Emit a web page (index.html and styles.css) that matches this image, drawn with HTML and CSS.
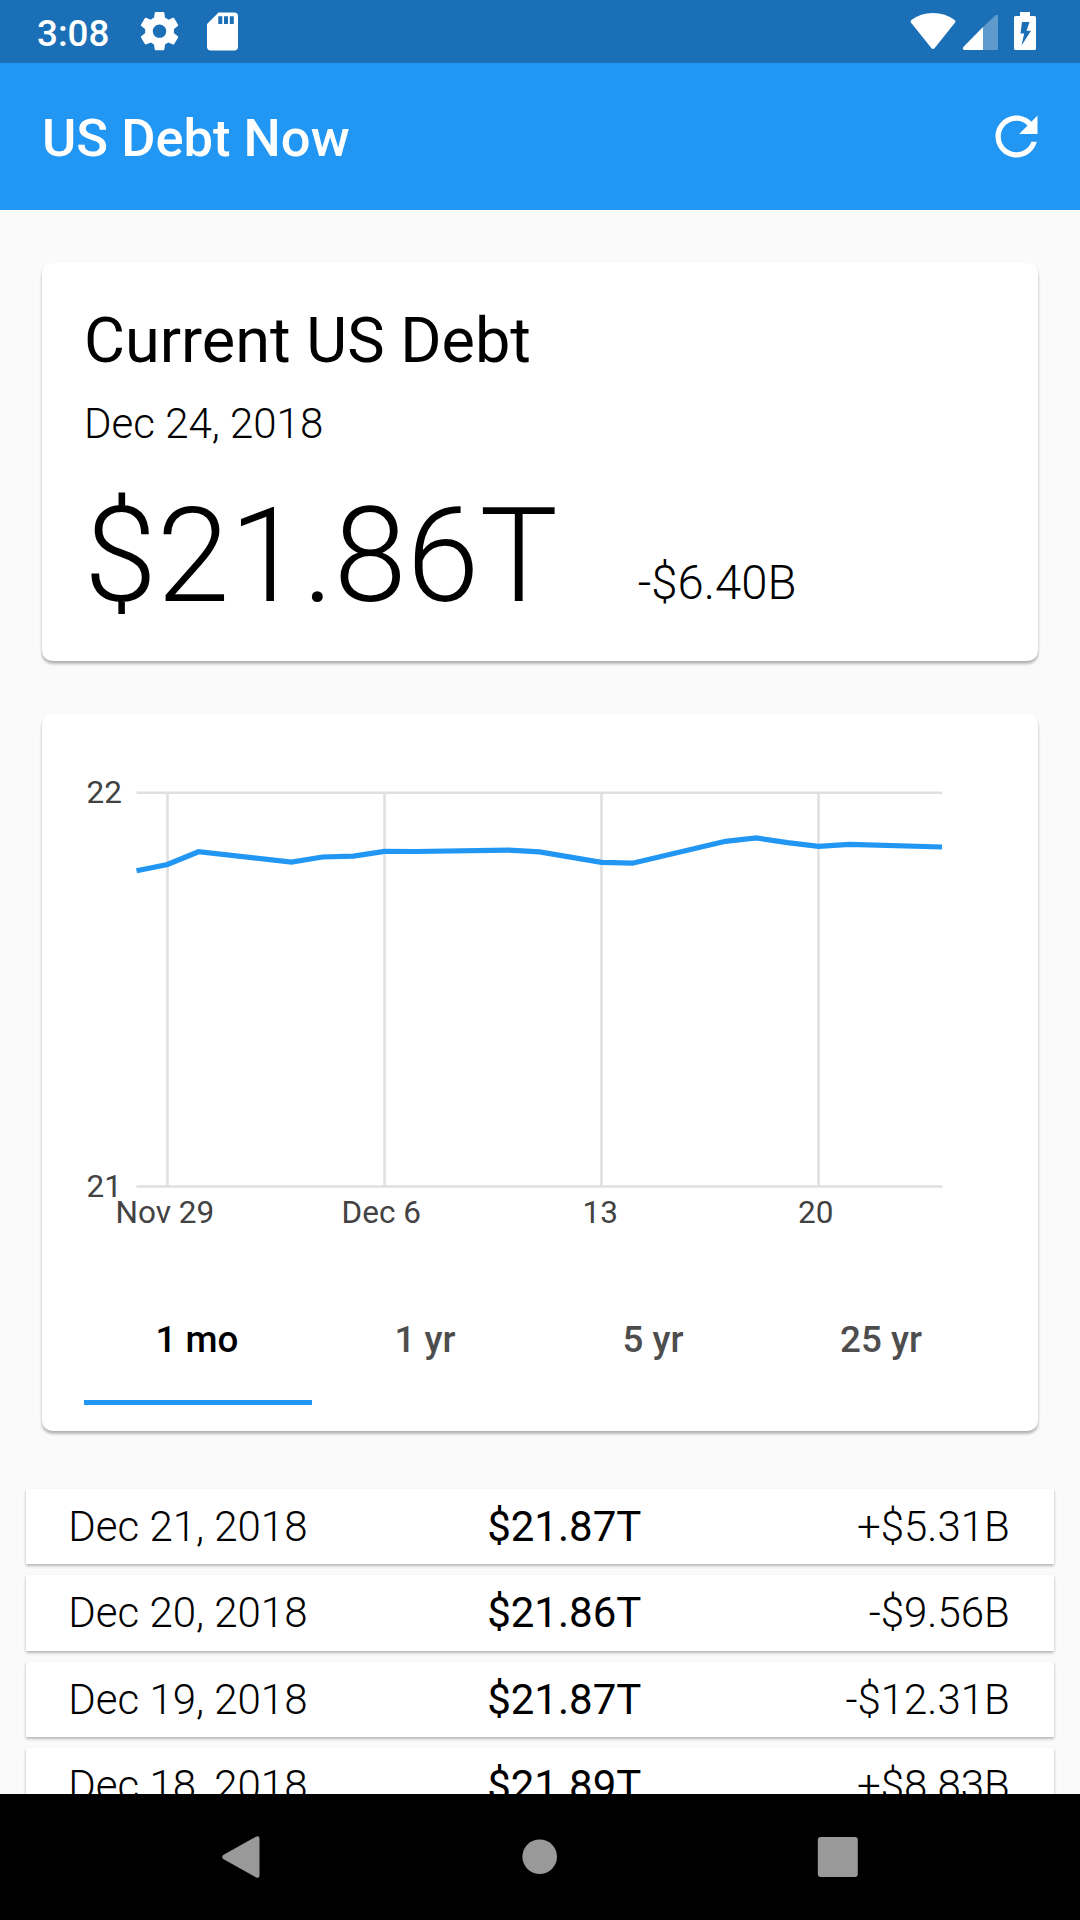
FILE: index.html
```
<!DOCTYPE html>
<html lang="en">
<head>
    <meta charset="UTF-8">
    <meta name="viewport" content="width=device-width, initial-scale=1.0">
    <title>US Debt Now</title>
    <link rel="stylesheet" href="styles.css">
</head>
<body>

    <div class="status-bar">
        <span class="clock">3:08</span>
        <svg class="status-left" width="100" height="63" viewBox="140 0 100 63">
            <path transform="translate(136.5 8.1) scale(1.92)" d="M19.43 12.98c.04-.32.07-.64.07-.98s-.03-.66-.07-.98l2.11-1.65c.19-.15.24-.42.12-.64l-2-3.46c-.12-.22-.39-.3-.61-.22l-2.49 1c-.52-.4-1.08-.73-1.69-.98l-.38-2.65C14.46 2.18 14.25 2 14 2h-4c-.25 0-.46.18-.49.42l-.38 2.65c-.61.25-1.17.59-1.69.98l-2.49-1c-.23-.09-.49 0-.61.22l-2 3.46c-.13.22-.07.49.12.64l2.11 1.65c-.04.32-.07.65-.07.98s.03.66.07.98l-2.11 1.65c-.19.15-.24.42-.12.64l2 3.46c.12.22.39.3.61.22l2.49-1c.52.4 1.08.73 1.69.98l.38 2.65c.03.24.24.42.49.42h4c.25 0 .46-.18.49-.42l.38-2.65c.61-.25 1.17-.59 1.69-.98l2.49 1c.23.09.49 0 .61-.22l2-3.46c.12-.22.07-.49-.12-.64l-2.11-1.65zM12 15.5c-1.93 0-3.5-1.57-3.5-3.5s1.57-3.5 3.5-3.5 3.5 1.57 3.5 3.5-1.57 3.5-3.5 3.5z"/>
            <path fill-rule="evenodd" d="M218.5 12.5H234.3q3.7 0 3.7 3.7V46.8q0 3.7-3.7 3.7H210.7q-3.7 0-3.7-3.7V24zM218.3 16.3v7.7h4v-7.7zM224 16.3v7.7h4v-7.7zM229.8 16.3v7.7h4v-7.7z"/>
        </svg>
        <svg class="status-right" width="130" height="63" viewBox="910 0 130 63">
            <path d="M933 49Q932 49 931.3 48L910.9 22.5Q910.2 21.5 911 20.3Q920.5 13 933 13T955 20.3Q955.8 21.5 955.1 22.5L934.7 48Q934 49 933 49z"/>
            <path class="signal-dim" d="M983 27L995.5 15.3Q998 14 998 16.5V48.5Q998 50 996.5 50H983z"/>
            <path d="M983 27V50H964.5Q962 49.5 963.3 46.9z"/>
            <path fill-rule="evenodd" d="M1020 12h10v4h4.5q1.5 0 1.5 1.5V48.5q0 1.5-1.5 1.5h-19q-1.5 0-1.5-1.5V17.5q0-1.5 1.5-1.5h4.5zM1022 22L1020.5 33.5H1024.2L1021.5 45.5L1031 30.8H1026.5L1029.5 22z"/>
        </svg>
    </div>

    <header class="app-bar">
        <h1>US Debt Now</h1>
        <svg width="63" height="63" viewBox="0 0 24 24">
            <path d="M17.65 6.35C16.2 4.9 14.21 4 12 4c-4.42 0-7.99 3.58-7.99 8s3.57 8 7.99 8c3.73 0 6.84-2.55 7.73-6h-2.08c-.82 2.33-3.04 4-5.65 4-3.31 0-6-2.69-6-6s2.69-6 6-6c1.66 0 3.14.69 4.22 1.78L13 11h7V4l-2.35 2.35z"/>
        </svg>
    </header>

    <main>
        <section class="card current">
            <h2>Current US Debt</h2>
            <p class="date">Dec 24, 2018</p>
            <div class="amount-row">
                <span class="amount">$21.86T</span>
                <span class="change">-$6.40B</span>
            </div>
        </section>

        <section class="card history">
            <svg class="chart" width="912" height="500" viewBox="84 756 912 500">
                <g class="grid">
                    <path d="M167.5 793V1186M384.5 793V1186M601.5 793V1186M818.5 793V1186"/>
                    <path d="M136.5 792.8H942.3M136.5 1186.5H942.3"/>
                </g>
                <polyline class="line" points="136.5,870.8 167.5,864.5 198.5,851.7 291.5,862 322.5,857 353.5,856.2 384.5,851.3 415.5,851.5 508.5,850.1 539.5,851.9 601.5,862.3 632.5,863.2 725.5,841.3 756.5,838 787.5,842.7 818.5,846.4 849.5,844.4 942,847"/>
                <g class="labels">
                    <text x="86.5" y="803">22</text>
                    <text x="86.5" y="1197">21</text>
                    <text x="115.6" y="1222.8">Nov 29</text>
                    <text x="341.5" y="1222.8">Dec 6</text>
                    <text x="582.5" y="1222.8">13</text>
                    <text x="798" y="1222.8">20</text>
                </g>
            </svg>
            <nav class="tabs">
                <a class="tab active">1 mo</a>
                <a class="tab">1 yr</a>
                <a class="tab">5 yr</a>
                <a class="tab">25 yr</a>
            </nav>
        </section>

        <div class="list">
            <div class="row"><span>Dec 21, 2018</span><b>$21.87T</b><span>+$5.31B</span></div>
            <div class="row"><span>Dec 20, 2018</span><b>$21.86T</b><span>-$9.56B</span></div>
            <div class="row"><span>Dec 19, 2018</span><b>$21.87T</b><span>-$12.31B</span></div>
            <div class="row"><span>Dec 18, 2018</span><b>$21.89T</b><span>+$8.83B</span></div>
        </div>
    </main>

    <footer class="nav-bar">
        <svg width="1080" height="126" viewBox="0 1794 1080 126">
            <path d="M223.2 1855L255.8 1836.8Q259.5 1835.2 259.5 1838.5V1875.5Q259.5 1879 255.8 1877.2L223.2 1859Q221.2 1857 223.2 1855z"/>
            <circle cx="539.7" cy="1856.7" r="17.3"/>
            <rect x="817.8" y="1837" width="40" height="40" rx="3"/>
        </svg>
    </footer>

</body>
</html>
```
FILE: styles.css
```
* {
    padding: 0;
    margin: 0;
    box-sizing: border-box;
}

body {
    width: 1080px;
    height: 1920px;
    overflow: hidden;
    display: flex;
    flex-direction: column;
    background: #fafafa;
    color: #000;
    font-family: Roboto, sans-serif;
}

svg {
    display: block;
}

.status-bar {
    flex: none;
    height: 63px;
    padding: 0 40px 0 37px;
    display: flex;
    align-items: center;
    background: #1a6fb7;
    color: #fff;
    fill: #fff;
}

.clock {
    width: 103px;
    padding-top: 3px;
    font-size: 36.75px;
    font-weight: 500;
}

.status-right {
    margin-left: auto;
}

.signal-dim {
    opacity: 0.3;
}

.app-bar {
    flex: none;
    height: 147px;
    padding: 0 32px 0 42px;
    display: flex;
    align-items: center;
    justify-content: space-between;
    background: #2196f3;
    color: #fff;
    fill: #fff;
}

.app-bar h1 {
    padding-top: 2px;
    font-size: 52.5px;
    font-weight: 500;
}

main {
    flex: 1;
    min-height: 0;
    overflow: hidden;
    padding-top: 53px;
}

.card {
    margin: 0 42px 53px;
    background: #fff;
    border-radius: 10.5px;
    box-shadow: 0 3px 3px rgba(0, 0, 0, 0.22), 0 2px 3px rgba(0, 0, 0, 0.1);
}

.current {
    height: 398px;
    padding: 41px 42px 0;
}

.current h2 {
    font-size: 63px;
    line-height: 74px;
    font-weight: 400;
}

.date {
    margin-top: 21px;
    font-size: 42px;
    line-height: 49px;
    font-weight: 300;
}

.amount-row {
    margin-top: 31px;
    display: flex;
    align-items: flex-end;
    gap: 80px;
    font-weight: 300;
}

.amount {
    font-size: 131.25px;
    line-height: 154px;
}

.change {
    padding-bottom: 22px;
    font-size: 47.25px;
    line-height: 56px;
}

.history {
    height: 716.5px;
    padding: 42px 42px 0;
}

.grid {
    fill: none;
    stroke: #e0e0e0;
    stroke-width: 2.6;
}

.line {
    fill: none;
    stroke: #2196f3;
    stroke-width: 5.25;
}

.labels {
    font-size: 31.5px;
    fill: #424242;
}

.tabs {
    margin-top: 22px;
    display: grid;
    grid-template-columns: repeat(4, 1fr);
}

.tab {
    height: 126.5px;
    padding: 39.5px 2px 0 0;
    border-bottom: 5.25px solid transparent;
    text-align: center;
    font-size: 36.75px;
    font-weight: 500;
    line-height: 43px;
    color: #4d4d4d;
}

.tab.active {
    color: #000;
    border-color: #2196f3;
}

.list {
    padding: 5px 26.25px 0;
    display: flex;
    flex-direction: column;
    gap: 11.1px;
}

.row {
    height: 75.5px;
    padding: 13px 44px 0 42px;
    display: grid;
    grid-template-columns: 390px 212px 1fr;
    background: #fff;
    box-shadow: 0 2px 3px rgba(0, 0, 0, 0.22), 0 1px 2px rgba(0, 0, 0, 0.1);
    font-size: 42px;
    line-height: 50px;
    font-weight: 300;
}

.row b {
    font-weight: 400;
    text-align: center;
}

.row span:last-child {
    text-align: right;
}

.nav-bar {
    flex: none;
    height: 126px;
    background: #000;
    fill: #999;
}
```
